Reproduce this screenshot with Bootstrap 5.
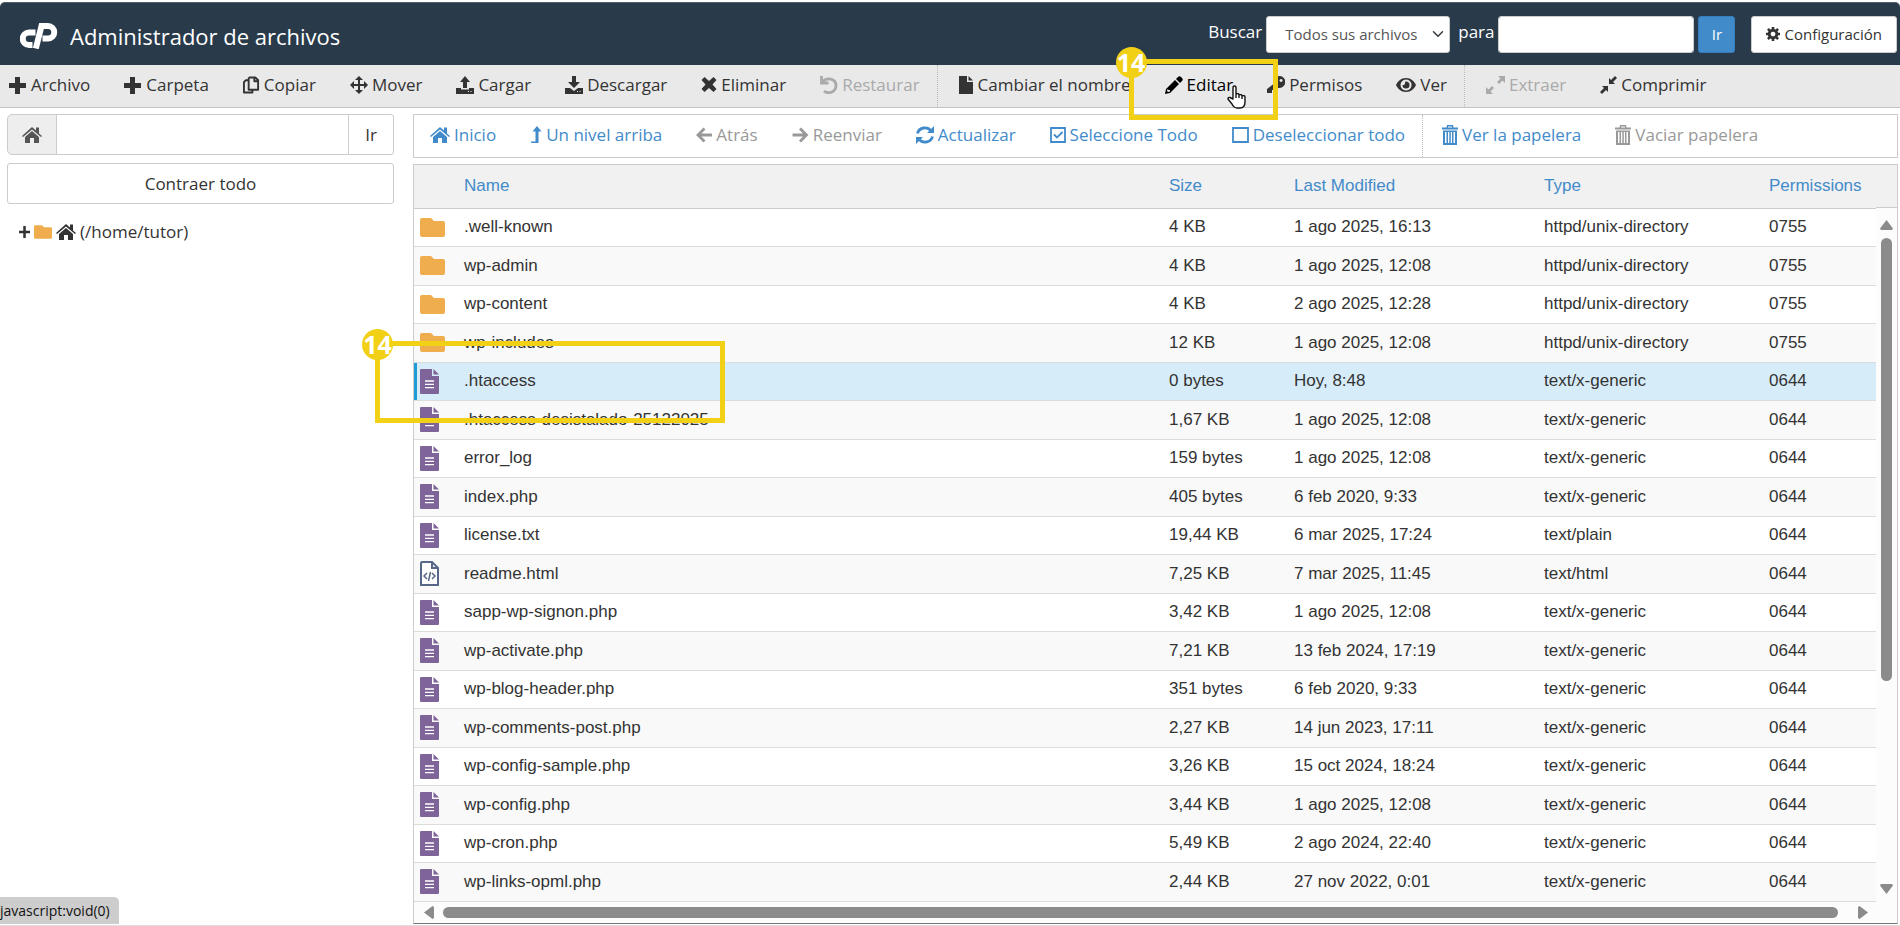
<!DOCTYPE html>
<html lang="es">
<head>
<meta charset="utf-8">
<meta name="viewport" content="width=device-width, initial-scale=1">
<title>Administrador de archivos</title>
<link href="https://cdn.jsdelivr.net/npm/bootstrap@5.3.0/dist/css/bootstrap.min.css" rel="stylesheet">
<style>
  :root { --fm-line: #ccc; --fm-link: #428bca; --fm-mark: #f2d016; --fm-bar: #8b8b8b; }
  body { font-family: "Open Sans", "Noto Sans", sans-serif; font-size: 17px; line-height: 24px; color: #333; }
  svg { flex: none; }
  .fm-page { border-bottom: 1px solid #ddd; }
  .fm-head { background: #293a4a; color: #fff; border-top: 1px solid #51606d; border-radius: 5px 5px 0 0; height: 63px; margin-top: 2px; padding: 0 3px 0 20px; }
  .fm-title { font-size: 22px; line-height: 32px; font-weight: 400; }
  .fm-search .form-control, .fm-search .form-select, .fm-search .btn { height: 37px; border-radius: 3px; font-size: 15px; }
  .fm-search .form-select { width: 184px; padding: 0 32px 0 18px; color: #555; border-color: #ccc; background-position: right 5px center; background-size: 12px 12px; }
  .fm-search .form-control { width: 196px; border-color: #ccc; }
  .fm-search label { line-height: 32px; align-self: flex-start; }
  .btn-go { background: var(--fm-link); border-color: #357ebd; color: #fff; width: 37px; padding: 0; }
  .btn-plain { background: #fff; border: 1px solid var(--fm-line); border-radius: 3px; color: #333; }
  .btn-conf { padding: 0 14px; }
  .fm-tools { background: #e9e9e9; border-bottom: 1px solid #c4c4c4; height: 43px; padding-left: 9px; }
  .fm-item { display: flex; align-items: center; gap: 4px; padding: 0 17px 2px; color: #333; text-decoration: none; white-space: nowrap; position: relative; border: 0; }
  .fm-item:first-child { padding-left: 0; }
  .fm-item.active { color: #000; }
  .fm-item.off { color: #aaa; }
  .fm-split { border-left: 1px dotted #bbb; padding-left: 21px; }
  .fm-main { padding: 6px 2px 0 7px; gap: 19px; }
  .fm-side { width: 387px; }
  .fm-side .form-control, .fm-side .btn, .fm-side .input-group-text { height: 41px; border-color: var(--fm-line); font-size: 17px; padding-top: 0; padding-bottom: 0; }
  .fm-side .input-group-text { width: 50px; background: #eee; color: #555; justify-content: center; border-radius: 5px 0 0 5px; }
  .fm-nav { border: 1px solid var(--fm-line); height: 44px; margin-bottom: 6px; padding-left: 16px; }
  .fm-nav .fm-item { color: var(--fm-link); }
  .fm-nav .fm-item.off { color: #999; }
  .fm-nav .fm-split { padding-left: 19px; }
  .fm-list { border: 1px solid var(--fm-line); border-bottom: 1px solid #777; }
  .fm-table { table-layout: fixed; margin: 0; font-family: "Liberation Sans", Arial, sans-serif; font-size: 17px; line-height: 24px; color: #333; }
  .fm-table > :not(caption) > * > * { padding: 0; vertical-align: middle; color: #333; border-bottom: 1px solid #dcdcdc; background: #fff; box-shadow: none; white-space: nowrap; }
  .fm-table > thead > tr > th { height: 43px; font-weight: 400; background: #f1f1f1; border-color: var(--fm-line); }
  .fm-table th a { color: var(--fm-link); text-decoration: none; }
  .fm-table > tbody > tr { height: 38px; }
  .fm-table > tbody > tr:nth-child(even) { height: 39px; }
  .fm-table > tbody > tr:nth-child(even) > td { background: #f9f9f9; }
  .fm-table > tbody > tr.picked > td { background: #d7ecf9; }
  .fm-table > tbody > tr.picked > td:first-child { box-shadow: inset 3px 0 #1f9bd6; position: relative; }
  .fm-table td:first-child { padding-left: 6px !important; }
  .fm-table td svg { display: block; }
  .c-icon { width: 50px; } .c-size { width: 125px; } .c-date { width: 250px; } .c-type { width: 225px; } .c-perm { width: 107px; }
  .fm-vbar { width: 21px; background: #fcfcfc; }
  .fm-vbar-head { height: 43px; background: #f1f1f1; border-bottom: 1px solid var(--fm-line); }
  .fm-thumb { background: var(--fm-bar); border-radius: 6px; }
  .fm-vbar .fm-thumb { width: 11px; flex: 443 0 0; }
  .fm-vbar .fm-rest { flex: 203 0 0; }
  .fm-hbar { height: 21px; background: #fcfcfc; padding: 0 29px 0 10px; gap: 9px; }
  .fm-hbar .fm-thumb { height: 11px; flex: 1; margin-right: 11px; }
  .fm-status { position: fixed; left: 0; bottom: 2px; height: 27px; width: 119px; background: #cdcdcd; color: #111; font-size: 14px; line-height: 28px; border-radius: 0 5px 0 0; white-space: nowrap; overflow: hidden; }
  .fm-mark { position: absolute; border: 5px solid var(--fm-mark); z-index: 5; pointer-events: none; }
  .fm-mark span { position: absolute; left: -18px; top: -17px; width: 31px; height: 31px; border-radius: 50%; background: var(--fm-mark); color: #fff; font: 700 25px/31px "Open Sans", sans-serif; text-align: center; }
  .mark-edit { left: -19px; top: -6px; width: 149px; height: 61px; }
  .mark-row { left: -39px; top: -22px; width: 350px; height: 82px; }
  .fm-hand { position: absolute; left: 79px; top: 20px; z-index: 6; }
</style>
</head>
<body class="bg-white">
<svg class="d-none" fill="currentColor">
  <symbol id="plus" viewBox="0 0 18 18"><path d="M6 1h5v6h6v5h-6v6H6v-6H0V7h6z"/></symbol>
  <symbol id="copy" viewBox="0 0 18 18"><path d="M7 1h6l3 3v10H6V2zM12 1v4h4M5 4H3L1 6v11h9v-3" fill="none" stroke="currentColor" stroke-width="2" stroke-linejoin="round"/></symbol>
  <symbol id="move" viewBox="0 0 18 18"><path d="M9 0l4 4h-3v4h4V5l4 4-4 4v-3h-4v4h3l-4 4-4-4h3v-4H4v3L0 9l4-4v3h4V4H5z"/></symbol>
  <symbol id="up" viewBox="0 0 18 18"><path d="M9 0l5 6h-3v6H7V6H4z"/><path d="M0 12h5v1.500h8V12h5v6H0zM12 15v1h1v-1zM14.500 15v1h1v-1z" fill-rule="evenodd"/></symbol>
  <symbol id="down" viewBox="0 0 18 18"><path d="M7 0h4v6h4l-6 6-6-6h4z"/><path d="M0 12h5l4 3 4-3h5v6H0zM12 15v1h1v-1zM14.500 15v1h1v-1z" fill-rule="evenodd"/></symbol>
  <symbol id="times" viewBox="0 0 15 18"><path d="M3 1l4.500 4L12 1l3 3-4 4.500L15 13l-3 3-4.500-4L3 16l-3-3 4-4.500L0 4z"/></symbol>
  <symbol id="undo" viewBox="0 0 18 18"><path d="M1.500 0v7h7M2.500 6C6 1 16 2 16 9.500c0 7-8 9-12 5.500" fill="none" stroke="currentColor" stroke-width="2.800"/></symbol>
  <symbol id="file" viewBox="0 0 15 18"><path d="M0 0h8v6h6v12H0zM9.500 0L14 4.500H9.500z"/></symbol>
  <symbol id="pencil" viewBox="0 0 18 18"><path d="M13 1q1.500-1.500 3 0l1 1q1.500 1.500 0 3l-2 2-4-4zM10 4l4 4-9 9-5 1 1-5zM2.500 13l-.5 2 1 1 2-.5V14H3.500z" fill-rule="evenodd"/></symbol>
  <symbol id="key" viewBox="0 0 18 18"><path d="M12 0a6 6 0 1 1-2 11.500L8 14H5v3H0v-4l6.500-5A6 6 0 0 1 12 0zm2 3a1.500 1.500 0 1 0 .1 0z" fill-rule="evenodd"/></symbol>
  <symbol id="eye" viewBox="0 0 20 18"><path d="M10 2c5 0 8.500 3.500 10 7-1.500 3.500-5 7-10 7S1.500 12.500 0 9c1.500-3.500 5-7 10-7zm0 1.500a5.500 5.500 0 1 0 .1 0zM10 5.500a3.500 3.500 0 1 1-3.500 3.500c1.500.5 3-1 2.500-3.200z" fill-rule="evenodd"/></symbol>
  <symbol id="expand" viewBox="0 0 19 18"><path d="M12 0h7v7l-2.500-2.500L13 8l-2-2 3.500-3.500zM7 18H0v-7l2.500 2.500L6 10l2 2-3.500 3.500z"/></symbol>
  <symbol id="compress" viewBox="0 0 17 18"><path d="M9 2l2 2 4-4 2 2-4 4 2 2H9zM2 10h6v6l-2-2-4 4-2-2 4-4z"/></symbol>
  <symbol id="home" viewBox="0 0 20 18"><path d="M10 1l4 3.500V1.500h3v6L20 10l-1 1-9-7.500L1 11l-1-1z"/><path d="M10 5l7 6v6h-5v-5H8v5H3v-6z"/></symbol>
  <symbol id="level" viewBox="0 0 11 18"><path d="M6.500 0L11 5.500H8V17H1l-1-1.500h5V5.500H2z"/></symbol>
  <symbol id="left" viewBox="0 0 16 18"><path d="M8.500 2.500L2 9l6.500 6.500M2 9h14" fill="none" stroke="currentColor" stroke-width="2.800"/></symbol>
  <symbol id="right" viewBox="0 0 16 18"><path d="M7.500 2.500L14 9l-6.500 6.500M14 9H0" fill="none" stroke="currentColor" stroke-width="2.800"/></symbol>
  <symbol id="sync" viewBox="0 0 18 18"><path d="M1.500 7.500C3 1 12 0 15.500 5.500M16.500 10.500C15 17 6 18 2.500 12.500" fill="none" stroke="currentColor" stroke-width="2.800"/><path d="M18 0v7h-7zM0 18v-7h7z"/></symbol>
  <symbol id="check" viewBox="0 0 16 18"><path d="M1 2h14v14H1zM4 8.500l3 3L12.500 6" fill="none" stroke="currentColor" stroke-width="1.800"/></symbol>
  <symbol id="square" viewBox="0 0 17 18"><path d="M1 2h15v14H1z" fill="none" stroke="currentColor" stroke-width="1.800"/></symbol>
  <symbol id="trash" viewBox="0 0 16 20"><path d="M0 2.500h4.500L5 0h6l.5 2.500H16V4.500H0zM6 1.500V2.500h4v-1zM1 5.500h14V20H1zM3 7v11h1.500V7zM6 7v11h1.300V7zM8.800 7v11H10V7zM11.500 7v11H13V7z" fill-rule="evenodd"/></symbol>
  <symbol id="cog" viewBox="0 0 16 16"><path d="M6.500 0h3v2.200l1.600.7 1.700-1.700 2 2-1.600 1.700.7 1.600H16v3h-2.100l-.7 1.600 1.600 1.700-2 2-1.700-1.700-1.600.7V16h-3v-2.200l-1.600-.7-1.700 1.700-2-2 1.600-1.700-.7-1.600H0v-3h2.100l.7-1.600-1.600-1.700 2-2 1.700 1.700 1.600-.7zM8 5.300a2.700 2.700 0 1 0 .1 0z" fill-rule="evenodd"/></symbol>
  <symbol id="folder" viewBox="0 0 25 19"><path fill="#f0ad4e" d="M2 0h9l3 3h9q2 0 2 2v12q0 2-2 2H2q-2 0-2-2V2q0-2 2-2z"/></symbol>
  <symbol id="doc" viewBox="0 0 19 25"><path fill="#7f6499" d="M1 0h11v7h7v17q0 1-1 1H1q-1 0-1-1V1q0-1 1-1zM13.500 0L19 5.500h-5.500z"/><path stroke="#fff" stroke-width="1.300" d="M5 12h9M5 15.300h9M5 18.600h9"/></symbol>
  <symbol id="html" viewBox="0 0 19 25"><path fill="#fff" stroke="#566787" stroke-width="2" d="M2 1h10l6 6v17H1V2zM12 1v6h6"/><path fill="none" stroke="#566787" stroke-width="1.500" d="M7 12l-3 3 3 3M12 12l3 3-3 3M10.500 11l-2 9"/></symbol>
</svg>

<div class="fm-page d-flex flex-column min-vh-100">
  <header class="fm-head d-flex align-items-center justify-content-between">
    <div class="d-flex align-items-center pt-1">
      <svg class="me-2" width="38" height="26" viewBox="0 0 38 26" fill="none" stroke="#fff" stroke-width="6"><path d="M15.500 9.500H9a6 6 0 0 0 0 12.500h3.500"/><path d="M15.800 25.500L21.500 3H28a6.200 6.200 0 0 1 0 12.500h-5.500"/></svg>
      <h1 class="fm-title m-0 ps-1">Administrador de archivos</h1>
    </div>
    <form class="fm-search d-flex align-items-center">
      <label for="scope" class="me-1">Buscar</label>
      <select id="scope" class="form-select"><option>Todos sus archivos</option></select>
      <label for="query" class="px-1 ms-1">para</label>
      <input id="query" type="text" class="form-control">
      <button type="button" class="btn btn-go ms-1">Ir</button>
      <button type="button" class="btn btn-plain btn-conf d-flex align-items-center ms-3 gap-1"><svg width="14" height="14" fill="currentColor"><use href="#cog"/></svg>Configuración</button>
    </form>
  </header>

  <nav class="fm-tools d-flex" aria-label="Acciones">
    <a class="fm-item" href="#"><svg width="18" height="18" fill="currentColor"><use href="#plus"/></svg>Archivo</a>
    <a class="fm-item" href="#"><svg width="18" height="18" fill="currentColor"><use href="#plus"/></svg>Carpeta</a>
    <a class="fm-item" href="#"><svg width="17" height="18" fill="currentColor"><use href="#copy"/></svg>Copiar</a>
    <a class="fm-item" href="#"><svg width="18" height="18" fill="currentColor"><use href="#move"/></svg>Mover</a>
    <a class="fm-item" href="#"><svg width="18" height="18" fill="currentColor"><use href="#up"/></svg>Cargar</a>
    <a class="fm-item" href="#"><svg width="18" height="18" fill="currentColor"><use href="#down"/></svg>Descargar</a>
    <a class="fm-item" href="#"><svg width="16" height="18" fill="currentColor"><use href="#times"/></svg>Eliminar</a>
    <a class="fm-item off" href="#"><svg width="18" height="18" fill="currentColor"><use href="#undo"/></svg>Restaurar</a>
    <a class="fm-item fm-split" href="#"><svg width="15" height="18" fill="currentColor"><use href="#file"/></svg>Cambiar el nombre</a>
    <a class="fm-item active" href="#"><svg width="18" height="18" fill="currentColor"><use href="#pencil"/></svg>Editar
      <span class="fm-mark mark-edit"><span>14</span></span>
      <svg class="fm-hand" width="19" height="24" viewBox="0 0 19 24"><path fill="#fff" stroke="#111" stroke-width="1.400" stroke-linejoin="round" d="M6 14V3q0-2 1.500-2T9 3v6q3-1 3 1 3-1 3 1 3-1 3 1v5q0 6-5 6h-3q-3 0-5-4l-4-5q0-2 2-1.500zM9 9v4M12 10v3M15 11v3"/></svg></a>
    <a class="fm-item" href="#"><svg width="18" height="18" fill="currentColor"><use href="#key"/></svg>Permisos</a>
    <a class="fm-item" href="#"><svg width="20" height="18" fill="currentColor"><use href="#eye"/></svg>Ver</a>
    <a class="fm-item fm-split off" href="#"><svg width="19" height="18" fill="currentColor"><use href="#expand"/></svg>Extraer</a>
    <a class="fm-item" href="#"><svg width="17" height="18" fill="currentColor"><use href="#compress"/></svg>Comprimir</a>
  </nav>

  <main class="fm-main d-flex flex-grow-1">
    <aside class="fm-side flex-shrink-0">
      <div class="input-group mb-2">
        <label class="input-group-text" for="path" aria-label="Ruta"><svg width="20" height="18" fill="currentColor"><use href="#home"/></svg></label>
        <input id="path" type="text" class="form-control">
        <button type="button" class="btn btn-plain px-3">Ir</button>
      </div>
      <button type="button" class="btn btn-plain w-100">Contraer todo</button>
      <a href="#" class="d-flex align-items-center mt-3 px-2 ms-1 text-reset text-decoration-none">
        <svg width="11" height="12" viewBox="0 0 11 12"><path d="M5.500 0v12M0 6h11" stroke="#333" stroke-width="2.500"/></svg>
        <svg class="mx-1" width="18" height="16"><use href="#folder"/></svg>
        <svg class="me-1" width="20" height="18" fill="currentColor"><use href="#home"/></svg>(/home/tutor)</a>
    </aside>

    <section class="flex-grow-1">
      <nav class="fm-nav d-flex" aria-label="Navegación">
        <a class="fm-item" href="#"><svg width="20" height="18" fill="currentColor"><use href="#home"/></svg>Inicio</a>
        <a class="fm-item" href="#"><svg width="12" height="18" fill="currentColor"><use href="#level"/></svg>Un nivel arriba</a>
        <a class="fm-item off" href="#"><svg width="16" height="18"><use href="#left"/></svg>Atrás</a>
        <a class="fm-item off" href="#"><svg width="17" height="18"><use href="#right"/></svg>Reenviar</a>
        <a class="fm-item" href="#"><svg width="18" height="18" fill="currentColor"><use href="#sync"/></svg>Actualizar</a>
        <a class="fm-item" href="#"><svg width="16" height="18"><use href="#check"/></svg>Seleccione Todo</a>
        <a class="fm-item" href="#"><svg width="17" height="18"><use href="#square"/></svg>Deseleccionar todo</a>
        <a class="fm-item fm-split" href="#"><svg width="16" height="20" fill="currentColor"><use href="#trash"/></svg>Ver la papelera</a>
        <a class="fm-item off" href="#"><svg width="16" height="20" fill="currentColor"><use href="#trash"/></svg>Vaciar papelera</a>
      </nav>

      <div class="fm-list">
        <div class="d-flex">
          <table class="table fm-table flex-grow-1">
            <colgroup><col class="c-icon"><col><col class="c-size"><col class="c-date"><col class="c-type"><col class="c-perm"></colgroup>
            <thead><tr><th></th><th><a href="#">Name</a></th><th><a href="#">Size</a></th><th><a href="#">Last Modified</a></th><th><a href="#">Type</a></th><th><a href="#">Permissions</a></th></tr></thead>
            <tbody>
              <tr><td><svg width="25" height="19"><use href="#folder"/></svg></td><td>.well-known</td><td>4 KB</td><td>1 ago 2025, 16:13</td><td>httpd/unix-directory</td><td>0755</td></tr>
              <tr><td><svg width="25" height="19"><use href="#folder"/></svg></td><td>wp-admin</td><td>4 KB</td><td>1 ago 2025, 12:08</td><td>httpd/unix-directory</td><td>0755</td></tr>
              <tr><td><svg width="25" height="19"><use href="#folder"/></svg></td><td>wp-content</td><td>4 KB</td><td>2 ago 2025, 12:28</td><td>httpd/unix-directory</td><td>0755</td></tr>
              <tr><td><svg width="25" height="19"><use href="#folder"/></svg></td><td>wp-includes</td><td>12 KB</td><td>1 ago 2025, 12:08</td><td>httpd/unix-directory</td><td>0755</td></tr>
              <tr class="picked"><td><svg width="19" height="25"><use href="#doc"/></svg><span class="fm-mark mark-row"><span>14</span></span></td><td>.htaccess</td><td>0 bytes</td><td>Hoy, 8:48</td><td>text/x-generic</td><td>0644</td></tr>
              <tr><td><svg width="19" height="25"><use href="#doc"/></svg></td><td>.htaccess-desistalado-25122025</td><td>1,67 KB</td><td>1 ago 2025, 12:08</td><td>text/x-generic</td><td>0644</td></tr>
              <tr><td><svg width="19" height="25"><use href="#doc"/></svg></td><td>error_log</td><td>159 bytes</td><td>1 ago 2025, 12:08</td><td>text/x-generic</td><td>0644</td></tr>
              <tr><td><svg width="19" height="25"><use href="#doc"/></svg></td><td>index.php</td><td>405 bytes</td><td>6 feb 2020, 9:33</td><td>text/x-generic</td><td>0644</td></tr>
              <tr><td><svg width="19" height="25"><use href="#doc"/></svg></td><td>license.txt</td><td>19,44 KB</td><td>6 mar 2025, 17:24</td><td>text/plain</td><td>0644</td></tr>
              <tr><td><svg width="19" height="25"><use href="#html"/></svg></td><td>readme.html</td><td>7,25 KB</td><td>7 mar 2025, 11:45</td><td>text/html</td><td>0644</td></tr>
              <tr><td><svg width="19" height="25"><use href="#doc"/></svg></td><td>sapp-wp-signon.php</td><td>3,42 KB</td><td>1 ago 2025, 12:08</td><td>text/x-generic</td><td>0644</td></tr>
              <tr><td><svg width="19" height="25"><use href="#doc"/></svg></td><td>wp-activate.php</td><td>7,21 KB</td><td>13 feb 2024, 17:19</td><td>text/x-generic</td><td>0644</td></tr>
              <tr><td><svg width="19" height="25"><use href="#doc"/></svg></td><td>wp-blog-header.php</td><td>351 bytes</td><td>6 feb 2020, 9:33</td><td>text/x-generic</td><td>0644</td></tr>
              <tr><td><svg width="19" height="25"><use href="#doc"/></svg></td><td>wp-comments-post.php</td><td>2,27 KB</td><td>14 jun 2023, 17:11</td><td>text/x-generic</td><td>0644</td></tr>
              <tr><td><svg width="19" height="25"><use href="#doc"/></svg></td><td>wp-config-sample.php</td><td>3,26 KB</td><td>15 oct 2024, 18:24</td><td>text/x-generic</td><td>0644</td></tr>
              <tr><td><svg width="19" height="25"><use href="#doc"/></svg></td><td>wp-config.php</td><td>3,44 KB</td><td>1 ago 2025, 12:08</td><td>text/x-generic</td><td>0644</td></tr>
              <tr><td><svg width="19" height="25"><use href="#doc"/></svg></td><td>wp-cron.php</td><td>5,49 KB</td><td>2 ago 2024, 22:40</td><td>text/x-generic</td><td>0644</td></tr>
              <tr><td><svg width="19" height="25"><use href="#doc"/></svg></td><td>wp-links-opml.php</td><td>2,44 KB</td><td>27 nov 2022, 0:01</td><td>text/x-generic</td><td>0644</td></tr>
            </tbody>
          </table>
          <div class="fm-vbar d-flex flex-column align-items-center flex-shrink-0">
            <div class="fm-vbar-head w-100 mb-2 flex-shrink-0"></div>
            <svg class="my-1" width="13" height="10"><path fill="#8b8b8b" d="M6.500 0L13 8.500 12 10H1L0 8.500z"/></svg>
            <div class="fm-thumb mt-1"></div>
            <div class="fm-rest"></div>
            <svg class="mb-2" width="13" height="10"><path fill="#8b8b8b" d="M6.500 10L13 1.500 12 0H1L0 1.500z"/></svg>
          </div>
        </div>
        <div class="fm-hbar d-flex align-items-center">
          <svg width="10" height="13"><path fill="#8b8b8b" d="M0 6.500L8.500 0 10 1v11l-1.500 1z"/></svg>
          <div class="fm-thumb"></div>
          <svg width="10" height="13"><path fill="#8b8b8b" d="M10 6.500L1.500 0 0 1v11l1.500 1z"/></svg>
        </div>
      </div>
    </section>
  </main>
</div>
<div class="fm-status">javascript:void(0)</div>
<script src="https://cdn.jsdelivr.net/npm/bootstrap@5.3.0/dist/js/bootstrap.bundle.min.js"></script>
</body>
</html>
